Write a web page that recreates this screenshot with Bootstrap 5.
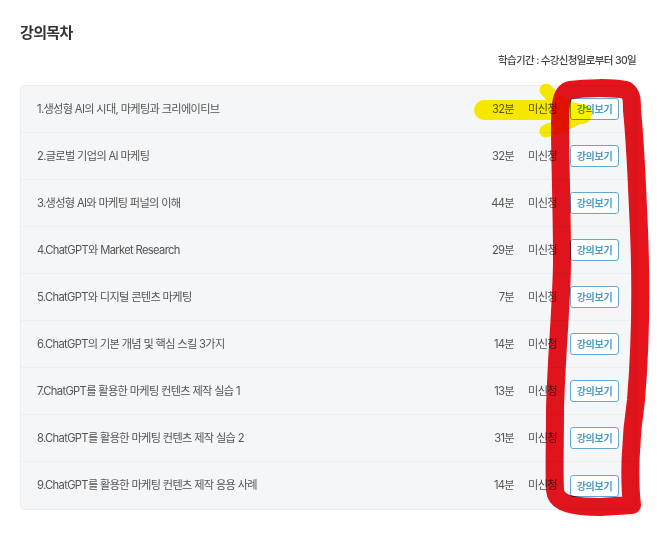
<!DOCTYPE html>
<html lang="ko">
<head>
<meta charset="utf-8">
<title>강의목차</title>
<link href="https://cdn.jsdelivr.net/npm/bootstrap@5.3.0/dist/css/bootstrap.min.css" rel="stylesheet">
<style>
html,body{width:657px;height:533px;overflow:hidden;background:#fff}
body{font-family:Inter,"Noto Sans CJK KR",sans-serif;color:#555;letter-spacing:-.66px;position:relative}
.page-wrap{padding:22px 20px 0 20px;filter:blur(.3px)}
.toc-title{font-size:15px;line-height:22px;font-weight:700;color:#333;margin:0}
.toc-period{font-size:10.5px;line-height:14px;font-weight:500;color:#444;margin-top:10px;margin-bottom:17px;text-align:right;padding-right:1px}
.toc-list{background:#f5f6f8;border:1px solid #eceef0;border-radius:4px;overflow:hidden}
.toc-row{height:47px;padding:0 17px 0 16px;border-bottom:1px solid #eceef0;font-size:11.2px}
.toc-row:last-child{border-bottom:0}
.toc-name{color:#555}
.toc-min{width:30px;text-align:right;color:#555}
.toc-state{width:29px;margin-left:14px;color:#555;white-space:nowrap}
.toc-btn{width:49px;height:22px;margin-left:13px;padding:0;font-size:10px;font-weight:700;line-height:20px;letter-spacing:-.3px;color:#4a9cca;background:#fff;border:1.3px solid #62a8d2;border-radius:3px}
.marks{position:absolute;left:0;top:0;width:657px;height:533px;pointer-events:none}
</style>
</head>
<body>
<div class="page-wrap">
  <h2 class="toc-title">강의목차</h2>
  <p class="toc-period">학습기간 : 수강신청일로부터 30일</p>
  <div class="toc-list">
    <div class="toc-row d-flex align-items-center"><span class="toc-name flex-grow-1">1.생성형 AI의 시대, 마케팅과 크리에이티브</span><span class="toc-min">32분</span><span class="toc-state">미신청</span><button class="toc-btn" type="button">강의보기</button></div>
    <div class="toc-row d-flex align-items-center"><span class="toc-name flex-grow-1">2.글로벌 기업의 AI 마케팅</span><span class="toc-min">32분</span><span class="toc-state">미신청</span><button class="toc-btn" type="button">강의보기</button></div>
    <div class="toc-row d-flex align-items-center"><span class="toc-name flex-grow-1">3.생성형 AI와 마케팅 퍼널의 이해</span><span class="toc-min">44분</span><span class="toc-state">미신청</span><button class="toc-btn" type="button">강의보기</button></div>
    <div class="toc-row d-flex align-items-center"><span class="toc-name flex-grow-1">4.ChatGPT와 Market Research</span><span class="toc-min">29분</span><span class="toc-state">미신청</span><button class="toc-btn" type="button">강의보기</button></div>
    <div class="toc-row d-flex align-items-center"><span class="toc-name flex-grow-1">5.ChatGPT와 디지털 콘텐츠 마케팅</span><span class="toc-min">7분</span><span class="toc-state">미신청</span><button class="toc-btn" type="button">강의보기</button></div>
    <div class="toc-row d-flex align-items-center"><span class="toc-name flex-grow-1">6.ChatGPT의 기본 개념 및 핵심 스킬 3가지</span><span class="toc-min">14분</span><span class="toc-state">미신청</span><button class="toc-btn" type="button">강의보기</button></div>
    <div class="toc-row d-flex align-items-center"><span class="toc-name flex-grow-1">7.ChatGPT를 활용한 마케팅 컨텐츠 제작 실습 1</span><span class="toc-min">13분</span><span class="toc-state">미신청</span><button class="toc-btn" type="button">강의보기</button></div>
    <div class="toc-row d-flex align-items-center"><span class="toc-name flex-grow-1">8.ChatGPT를 활용한 마케팅 컨텐츠 제작 실습 2</span><span class="toc-min">31분</span><span class="toc-state">미신청</span><button class="toc-btn" type="button">강의보기</button></div>
    <div class="toc-row d-flex align-items-center"><span class="toc-name flex-grow-1">9.ChatGPT를 활용한 마케팅 컨텐츠 제작 응용 사례</span><span class="toc-min">14분</span><span class="toc-state">미신청</span><button class="toc-btn" type="button">강의보기</button></div>
  </div>
</div>
<svg class="marks" viewBox="0 0 657 533" aria-hidden="true">
  <g fill="none" stroke="#fff000" stroke-linecap="round" stroke-linejoin="round" style="mix-blend-mode:multiply">
    <path d="M484 110 L560 110 L582 114" stroke-width="20"/>
    <path d="M546 90 C556 102 570 108 582 114" stroke-width="13"/>
    <path d="M546 131 C556 127 570 124 582 115" stroke-width="13"/>
  </g>
  <path d="M632 110 C632 100 632 94 626 90 C610 87 585 88 570 90 C561 92 560 105 560 125 C560 160 562 210 562 260 C562 300 556 360 555 410 C555 440 554 470 555 490 C556 504 575 507 600 507 L632 505 C629 480 630 440 636 400 C641 340 641 280 639 230 C637 190 636 150 632 110" fill="none" stroke="#e8141c" stroke-width="18" stroke-linecap="round" stroke-linejoin="round" style="mix-blend-mode:multiply"/>
</svg>
</body>
</html>
